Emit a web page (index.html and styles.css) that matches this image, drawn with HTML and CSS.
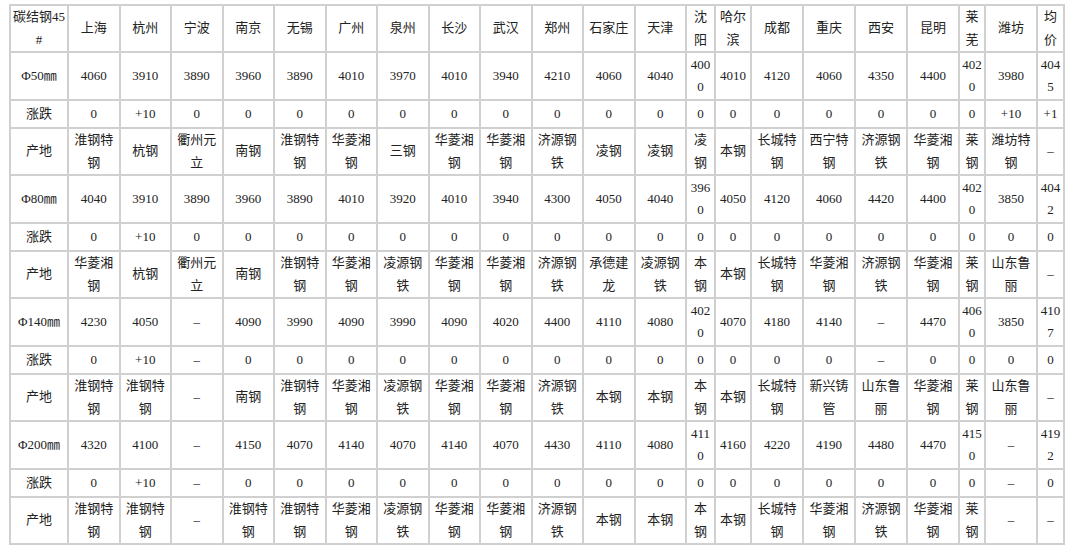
FILE: index.html
```html
<!DOCTYPE html>
<html lang="zh-CN">
<head>
<meta charset="utf-8">
<title>碳结钢45#价格</title>
<link rel="stylesheet" href="styles.css">
</head>
<body>
<table class="price">
<colgroup>
<col class="c-name">
<col class="c-std"><col class="c-std"><col class="c-std"><col class="c-std"><col class="c-std"><col class="c-std">
<col class="c-std"><col class="c-std"><col class="c-std"><col class="c-std"><col class="c-std"><col class="c-std">
<col class="c-sy"><col class="c-heb">
<col class="c-wide"><col class="c-wide"><col class="c-wide"><col class="c-wide">
<col class="c-lw"><col class="c-wide"><col class="c-avg">
</colgroup>
<tbody>
<tr class="r-head"><td>碳结钢45#</td><td>上海</td><td>杭州</td><td>宁波</td><td>南京</td><td>无锡</td><td>广州</td><td>泉州</td><td>长沙</td><td>武汉</td><td>郑州</td><td>石家庄</td><td>天津</td><td>沈阳</td><td>哈尔滨</td><td>成都</td><td>重庆</td><td>西安</td><td>昆明</td><td>莱芜</td><td>潍坊</td><td>均价</td></tr>
<tr class="r-price"><td>Φ50㎜</td><td>4060</td><td>3910</td><td>3890</td><td>3960</td><td>3890</td><td>4010</td><td>3970</td><td>4010</td><td>3940</td><td>4210</td><td>4060</td><td>4040</td><td>4000</td><td>4010</td><td>4120</td><td>4060</td><td>4350</td><td>4400</td><td>4020</td><td>3980</td><td>4045</td></tr>
<tr class="r-chg"><td>涨跌</td><td>0</td><td>+10</td><td>0</td><td>0</td><td>0</td><td>0</td><td>0</td><td>0</td><td>0</td><td>0</td><td>0</td><td>0</td><td>0</td><td>0</td><td>0</td><td>0</td><td>0</td><td>0</td><td>0</td><td>+10</td><td>+1</td></tr>
<tr class="r-origin"><td>产地</td><td>淮钢特钢</td><td>杭钢</td><td>衢州元立</td><td>南钢</td><td>淮钢特钢</td><td>华菱湘钢</td><td>三钢</td><td>华菱湘钢</td><td>华菱湘钢</td><td>济源钢铁</td><td>凌钢</td><td>凌钢</td><td>凌钢</td><td>本钢</td><td>长城特钢</td><td>西宁特钢</td><td>济源钢铁</td><td>华菱湘钢</td><td>莱钢</td><td>潍坊特钢</td><td>–</td></tr>
<tr class="r-price"><td>Φ80㎜</td><td>4040</td><td>3910</td><td>3890</td><td>3960</td><td>3890</td><td>4010</td><td>3920</td><td>4010</td><td>3940</td><td>4300</td><td>4050</td><td>4040</td><td>3960</td><td>4050</td><td>4120</td><td>4060</td><td>4420</td><td>4400</td><td>4020</td><td>3850</td><td>4042</td></tr>
<tr class="r-chg"><td>涨跌</td><td>0</td><td>+10</td><td>0</td><td>0</td><td>0</td><td>0</td><td>0</td><td>0</td><td>0</td><td>0</td><td>0</td><td>0</td><td>0</td><td>0</td><td>0</td><td>0</td><td>0</td><td>0</td><td>0</td><td>0</td><td>0</td></tr>
<tr class="r-origin"><td>产地</td><td>华菱湘钢</td><td>杭钢</td><td>衢州元立</td><td>南钢</td><td>淮钢特钢</td><td>华菱湘钢</td><td>凌源钢铁</td><td>华菱湘钢</td><td>华菱湘钢</td><td>济源钢铁</td><td>承德建龙</td><td>凌源钢铁</td><td>本钢</td><td>本钢</td><td>长城特钢</td><td>华菱湘钢</td><td>济源钢铁</td><td>华菱湘钢</td><td>莱钢</td><td>山东鲁丽</td><td>–</td></tr>
<tr class="r-price"><td>Φ140㎜</td><td>4230</td><td>4050</td><td>–</td><td>4090</td><td>3990</td><td>4090</td><td>3990</td><td>4090</td><td>4020</td><td>4400</td><td>4110</td><td>4080</td><td>4020</td><td>4070</td><td>4180</td><td>4140</td><td>–</td><td>4470</td><td>4060</td><td>3850</td><td>4107</td></tr>
<tr class="r-chg"><td>涨跌</td><td>0</td><td>+10</td><td>–</td><td>0</td><td>0</td><td>0</td><td>0</td><td>0</td><td>0</td><td>0</td><td>0</td><td>0</td><td>0</td><td>0</td><td>0</td><td>0</td><td>–</td><td>0</td><td>0</td><td>0</td><td>0</td></tr>
<tr class="r-origin"><td>产地</td><td>淮钢特钢</td><td>淮钢特钢</td><td>–</td><td>南钢</td><td>淮钢特钢</td><td>华菱湘钢</td><td>凌源钢铁</td><td>华菱湘钢</td><td>华菱湘钢</td><td>济源钢铁</td><td>本钢</td><td>本钢</td><td>本钢</td><td>本钢</td><td>长城特钢</td><td>新兴铸管</td><td>山东鲁丽</td><td>华菱湘钢</td><td>莱钢</td><td>山东鲁丽</td><td>–</td></tr>
<tr class="r-price"><td>Φ200㎜</td><td>4320</td><td>4100</td><td>–</td><td>4150</td><td>4070</td><td>4140</td><td>4070</td><td>4140</td><td>4070</td><td>4430</td><td>4110</td><td>4080</td><td>4110</td><td>4160</td><td>4220</td><td>4190</td><td>4480</td><td>4470</td><td>4150</td><td>–</td><td>4192</td></tr>
<tr class="r-chg"><td>涨跌</td><td>0</td><td>+10</td><td>–</td><td>0</td><td>0</td><td>0</td><td>0</td><td>0</td><td>0</td><td>0</td><td>0</td><td>0</td><td>0</td><td>0</td><td>0</td><td>0</td><td>0</td><td>0</td><td>0</td><td>–</td><td>0</td></tr>
<tr class="r-origin"><td>产地</td><td>淮钢特钢</td><td>淮钢特钢</td><td>–</td><td>淮钢特钢</td><td>淮钢特钢</td><td>华菱湘钢</td><td>凌源钢铁</td><td>华菱湘钢</td><td>华菱湘钢</td><td>济源钢铁</td><td>本钢</td><td>本钢</td><td>本钢</td><td>本钢</td><td>长城特钢</td><td>华菱湘钢</td><td>济源钢铁</td><td>华菱湘钢</td><td>莱钢</td><td>–</td><td>–</td></tr>
</tbody>
</table>
</body>
</html>
```
FILE: styles.css
```css
html, body {
  margin: 0;
  padding: 0;
  background: #ffffff;
}

body {
  padding: 4px 0 0 9px;
  font-family: "Liberation Serif", "Noto Sans CJK SC", serif;
  font-size: 13px;
  color: #222222;
}

.price {
  width: 1054px;
  table-layout: fixed;
  border-collapse: collapse;
}

.price td {
  border: 2px solid #d0d0d0;
  padding: 0 2px;
  line-height: 22.5px;
  text-align: center;
  vertical-align: middle;
  word-break: break-all;
}

.c-name { width: 58px; }
.c-std { width: 51.5px; }
.c-sy { width: 29px; }
.c-heb { width: 36px; }
.c-wide { width: 52px; }
.c-lw { width: 26px; }
.c-avg { width: 27px; }

.r-head { height: 45px; }
.r-price { height: 48px; }
.r-chg { height: 28px; }
.r-origin { height: 47px; }
```
